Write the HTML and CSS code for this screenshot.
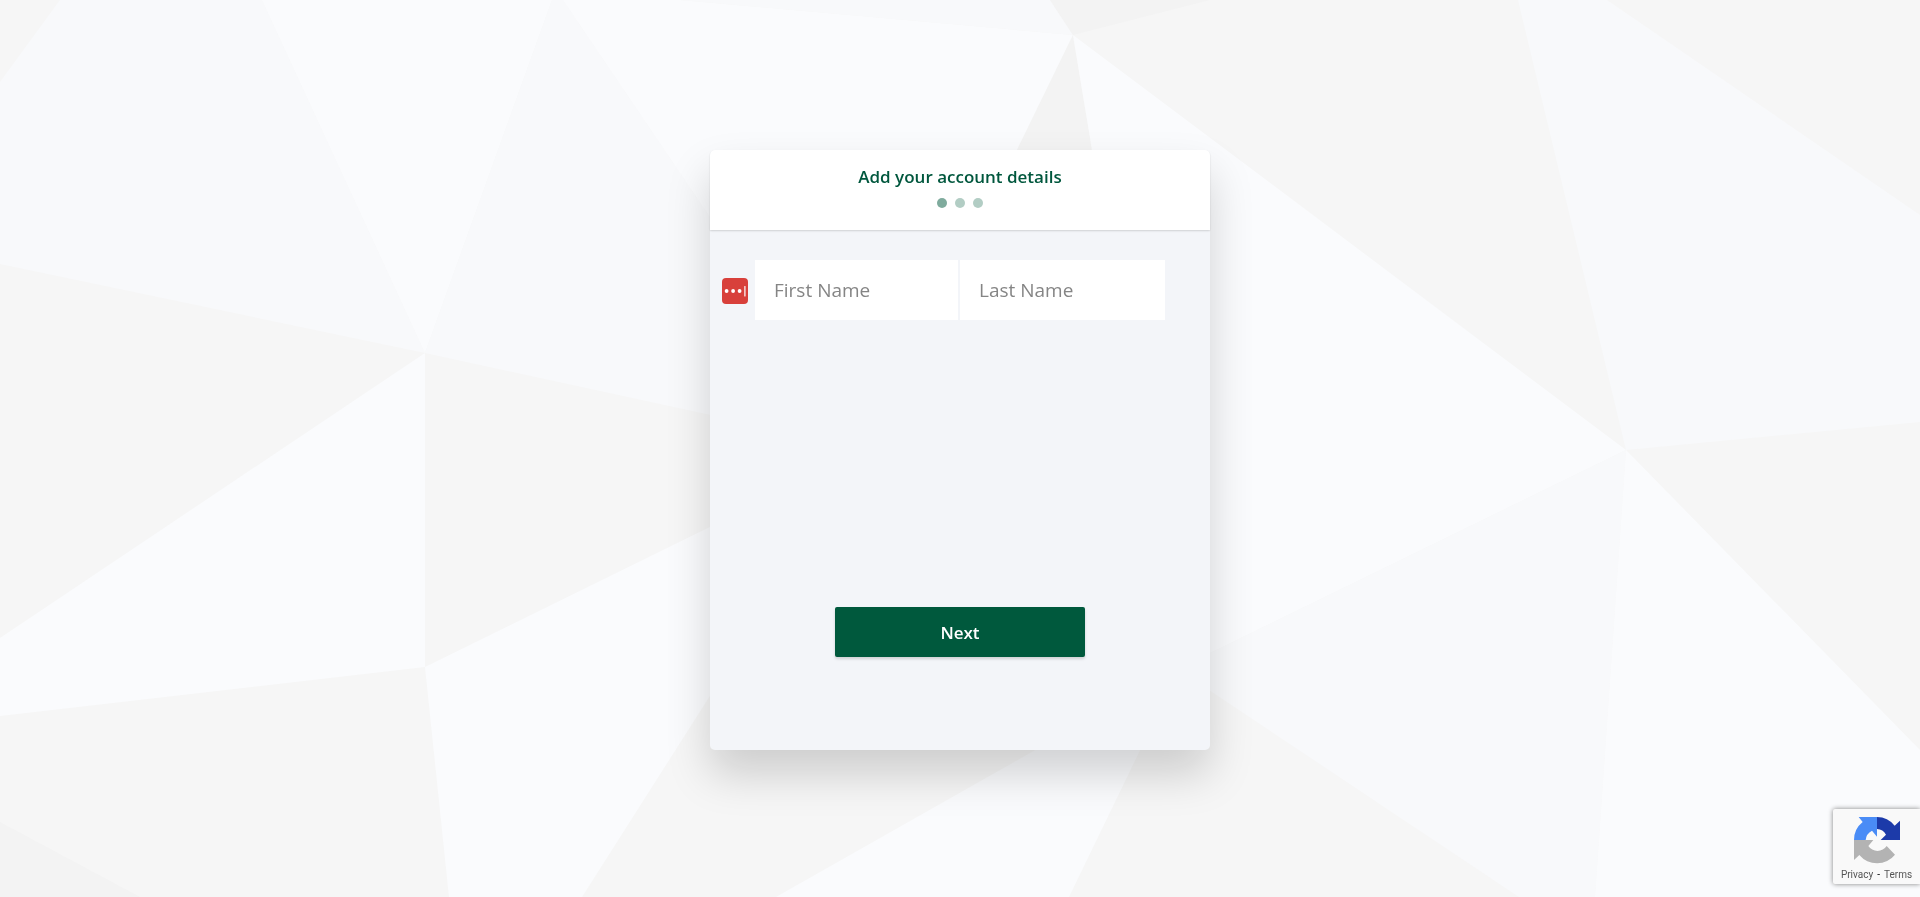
FILE: index.html
```html
<!DOCTYPE html>
<html lang="en">
<head>
    <meta charset="UTF-8">
    <meta name="viewport" content="width=device-width, initial-scale=1.0">
    <title>Add your account details</title>
    <link rel="stylesheet" href="styles.css">
</head>
<body>
    <!-- Low poly background -->
    <svg class="background" viewBox="0 0 1920 897" preserveAspectRatio="xMidYMid slice" aria-hidden="true">
        <rect class="grey" width="1920" height="897"/>
        <polygon class="blue" points="60,0 262,0 425,353 0,264 0,82"/>
        <polygon class="light" points="262,0 552,0 425,353"/>
        <polygon class="blue" points="552,0 563,0 720,232 720,417 425,353"/>
        <polygon class="light" points="563,0 680,0 1073,35 1017,150 960,300 720,232"/>
        <polygon class="blue" points="680,0 1050,0 1073,35"/>
        <polygon class="dark" points="1050,0 1210,0 1073,35"/>
        <polygon class="dark" points="1073,35 1092,150 1017,150"/>
        <polygon class="light" points="1073,35 1626,450 1200,658 1092,150"/>
        <polygon class="blue" points="1518,0 1607,0 1920,215 1920,422 1626,450"/>
        <polygon class="blue" points="1626,450 1595,897 1519,897 1200,684 1200,658"/>
        <polygon class="light" points="1626,450 1920,750 1920,897 1595,897"/>
        <polygon class="light" points="425,353 425,667 0,716 0,638"/>
        <polygon class="light" points="425,667 720,522 720,680 582,897 449,897"/>
        <polygon class="light" points="776,897 1053,740 1145,740 1069,897"/>
        <polygon class="dark" points="0,822 140,897 0,897"/>
    </svg>

    <main class="page">
        <form class="card">
            <div class="card-header">
                <h1>Add your account details</h1>
                <div class="steps">
                    <span class="step active"></span>
                    <span class="step"></span>
                    <span class="step"></span>
                </div>
            </div>
            <div class="card-body">
                <div class="name-row">
                    <svg class="password-icon" viewBox="0 0 26 26" aria-hidden="true">
                        <rect width="26" height="26" rx="4" fill="#d8403b"/>
                        <circle cx="4.6" cy="13" r="1.9" fill="#fff"/>
                        <circle cx="11.1" cy="13" r="1.9" fill="#fff"/>
                        <circle cx="17.6" cy="13" r="1.9" fill="#fff"/>
                        <rect x="22.3" y="8" width="1.2" height="10.4" rx="0.5" fill="#fff"/>
                    </svg>
                    <input type="text" class="input-field first-name" placeholder="First Name" aria-label="First Name">
                    <input type="text" class="input-field" placeholder="Last Name" aria-label="Last Name">
                </div>
                <button type="button" class="next-button">Next</button>
            </div>
        </form>
    </main>

    <!-- Recaptcha badge -->
    <div class="badge">
        <svg class="badge-logo" viewBox="102 66 138 141" aria-hidden="true">
            <path fill="#1c3aa9" d="M171 66A69 69 0 0 1 224 92L240 77V135H182L198 119A33 33 0 0 0 171 102Z"/>
            <path fill="#4a8cf6" d="M116 66H171V125L156 107A35 35 0 0 0 137 135H102A69 69 0 0 1 128 81Z"/>
            <path fill="#b3b3b3" d="M102 135H160L145 153A33 33 0 0 0 200 153L225 179A69 69 0 0 1 118 180L102 195Z"/>
        </svg>
        <div class="badge-links">
            <a href="#">Privacy</a>
            <span>-</span>
            <a href="#">Terms</a>
        </div>
    </div>
</body>
</html>
```

FILE: styles.css
```css
* {
    margin: 0;
    padding: 0;
    box-sizing: border-box;
}

body {
    font-family: 'Segoe UI', 'Open Sans', sans-serif;
    background: #f6f6f6;
    min-height: 100vh;
}

/* Background */
.background {
    position: fixed;
    top: 0;
    left: 0;
    width: 100%;
    height: 100%;
    z-index: -1;
}

.grey {
    fill: #f6f6f6;
}

.dark {
    fill: #f3f3f3;
}

.blue {
    fill: #f8f9fb;
}

.light {
    fill: #fafbfd;
}

/* Card */
.page {
    display: flex;
    justify-content: center;
    padding: 150px 16px 40px;
}

.card {
    display: flex;
    flex-direction: column;
    width: 100%;
    max-width: 500px;
    min-height: 600px;
    background: #f3f5f9;
    border-radius: 5px;
    box-shadow: 0 24px 44px rgba(0, 0, 0, 0.17);
}

.card-header {
    height: 80px;
    padding-top: 15px;
    background: #fff;
    border-radius: 5px 5px 0 0;
    box-shadow: 0 1px 2px rgba(0, 0, 0, 0.15);
    text-align: center;
}

.card-header h1 {
    font-size: 17px;
    line-height: 24px;
    font-weight: 600;
    color: #00573d;
}

.steps {
    display: flex;
    justify-content: center;
    gap: 8px;
    margin-top: 9px;
}

.step {
    width: 10px;
    height: 10px;
    border-radius: 50%;
    background: #b2cdc4;
}

.step.active {
    background: #7fab9d;
}

.card-body {
    flex: 1;
    display: flex;
    flex-direction: column;
    justify-content: space-between;
    align-items: center;
    padding: 30px 45px 93px;
}

.name-row {
    position: relative;
    display: flex;
    gap: 2px;
    width: 100%;
}

.password-icon {
    position: absolute;
    top: 18px;
    left: -33px;
    width: 26px;
    height: 26px;
}

.input-field {
    flex: 1;
    min-width: 0;
    height: 60px;
    padding: 0 19px;
    border: none;
    outline: none;
    background: #fff;
    font-family: inherit;
    font-size: 19px;
    color: #333;
}

.first-name {
    flex: 0 1 203px;
}

.input-field::placeholder {
    color: #858585;
}

.next-button {
    width: 250px;
    height: 50px;
    border: none;
    border-radius: 2px;
    background: #00593d;
    box-shadow: 0 2px 3px rgba(0, 0, 0, 0.15);
    color: #fff;
    font-family: inherit;
    font-size: 17px;
    font-weight: 600;
    cursor: pointer;
}

/* Badge */
.badge {
    position: fixed;
    right: 0;
    bottom: 13px;
    width: 87px;
    height: 75px;
    padding-top: 8px;
    background: #f9f9f9;
    border-radius: 2px 0 0 2px;
    box-shadow: 0 0 5px gray;
    text-align: center;
}

.badge-logo {
    display: block;
    width: 46px;
    height: 47px;
    margin: 0 auto;
}

.badge-links {
    display: flex;
    justify-content: center;
    gap: 4px;
    margin-top: 4px;
    font-family: Roboto, sans-serif;
    font-size: 10px;
    line-height: 14px;
    color: #000;
}

.badge-links a {
    color: #555;
    text-decoration: none;
}
```
